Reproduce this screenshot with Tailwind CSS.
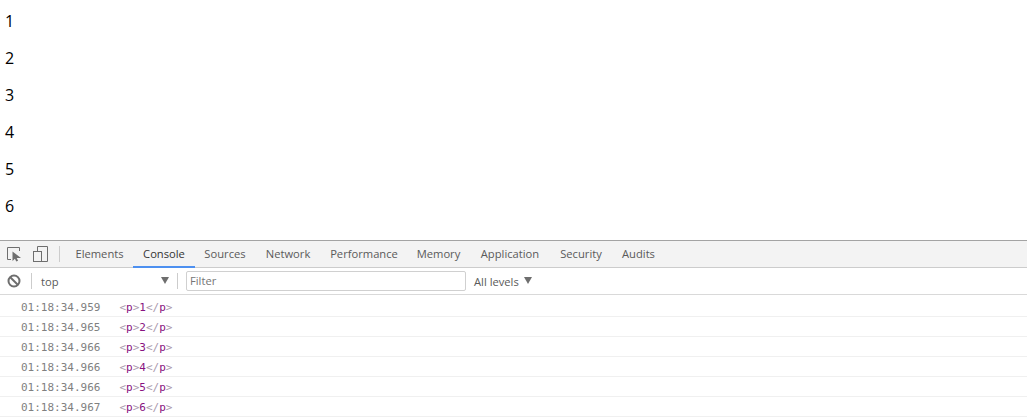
<!DOCTYPE html>
<html><head><meta charset="utf-8"><script src="https://cdn.jsdelivr.net/npm/@tailwindcss/browser@4"></script></head>
<body class="bg-white overflow-hidden">
<div class="w-[1027px] h-[417px] flex flex-col overflow-hidden font-['Open_Sans',sans-serif]">
  <div class="h-[240px] pl-[5px] pt-[11px] flex flex-col gap-[16px] text-[16px] leading-[21px] text-black">
    <p>1</p><p>2</p><p>3</p><p>4</p><p>5</p><p>6</p>
  </div>
  <div class="h-[28px] shrink-0 flex items-center bg-[#f3f3f3] border-t border-t-[#a3a3a3] border-b border-b-[#cccccc] text-[11.2px] text-[#5a5a5a]">
    <svg class="ml-[7px] shrink-0" width="15" height="15" viewBox="0 0 15 15" fill="none"><path d="M4 12.5H.5V.5H12.5V4" stroke="#6e6e6e" stroke-width="1"/><path d="M5.5 4.5v9.5l2.4-2.3 1.4 2.8 1.8-.8-1.4-2.7H14z" fill="#6e6e6e"/></svg>
    <svg class="ml-[11px] shrink-0" width="15" height="16" viewBox="0 0 15 16" fill="none"><path d="M4.5 5.5V.5h10v15h-6" stroke="#6e6e6e" stroke-width="1"/><rect x=".5" y="5.5" width="8" height="10" stroke="#6e6e6e" stroke-width="1"/></svg>
    <div class="ml-[11px] w-px h-[16px] bg-[#cccccc]"></div>
    <div class="ml-[6px] flex h-full">
      <span class="w-[67px] pt-[1px] flex items-center justify-center">Elements</span>
      <span class="w-[62px] pt-[2px] flex items-center justify-center text-[#333333] border-b-2 border-b-[#4d90f0] h-[27px]">Console</span>
      <span class="w-[60px] pt-[1px] flex items-center justify-center">Sources</span>
      <span class="w-[66px] pt-[1px] flex items-center justify-center">Network</span>
      <span class="w-[86px] pt-[1px] flex items-center justify-center">Performance</span>
      <span class="w-[63px] pt-[1px] flex items-center justify-center">Memory</span>
      <span class="w-[80px] pt-[1px] flex items-center justify-center">Application</span>
      <span class="w-[62px] pt-[1px] flex items-center justify-center">Security</span>
      <span class="w-[53px] pt-[1px] flex items-center justify-center">Audits</span>
    </div>
  </div>
  <div class="h-[27px] shrink-0 flex items-center bg-white border-b border-b-[#d9d9d9] text-[11.2px] text-[#5a5a5a]">
    <svg class="ml-[7px] shrink-0" width="14" height="14" viewBox="0 0 14 14" fill="none"><circle cx="7" cy="7" r="5.5" stroke="#6e6e6e" stroke-width="2"/><path d="M3 3l8 8" stroke="#6e6e6e" stroke-width="2"/></svg>
    <div class="ml-[10px] w-px h-[16px] bg-[#cccccc]"></div>
    <span class="ml-[9px] w-[120px] pt-[2px]">top</span>
    <span class="w-0 h-0 border-x-[4.5px] border-x-transparent border-t-[7px] border-t-[#6e6e6e] -mt-[2px]"></span>
    <div class="ml-[8px] w-px h-[16px] bg-[#cccccc]"></div>
    <div class="ml-[8px] w-[280px] h-[20px] border border-[#d0d0d0] rounded-[2px] pl-[3px] pt-[1px] flex items-center text-[#757575]">Filter</div>
    <span class="ml-[8px] pt-[2px]">All levels</span>
    <span class="ml-[5px] w-0 h-0 border-x-[4.5px] border-x-transparent border-t-[7px] border-t-[#6e6e6e] -mt-[2px]"></span>
  </div>
  <div class="pt-[2px] font-['DejaVu_Sans_Mono',monospace] text-[11px]">
    <div class="h-[20px] pl-[21px] pt-[4px] flex items-center gap-[19px] border-b border-b-[#f0f0f0]"><span class="text-[#808080]">01:18:34.959</span><span class="text-[#aa9aae]">&lt;<span class="text-[#881280]">p</span>&gt;<span class="text-[#881280]">1</span>&lt;/<span class="text-[#881280]">p</span>&gt;</span></div>
    <div class="h-[20px] pl-[21px] pt-[4px] flex items-center gap-[19px] border-b border-b-[#f0f0f0]"><span class="text-[#808080]">01:18:34.965</span><span class="text-[#aa9aae]">&lt;<span class="text-[#881280]">p</span>&gt;<span class="text-[#881280]">2</span>&lt;/<span class="text-[#881280]">p</span>&gt;</span></div>
    <div class="h-[20px] pl-[21px] pt-[4px] flex items-center gap-[19px] border-b border-b-[#f0f0f0]"><span class="text-[#808080]">01:18:34.966</span><span class="text-[#aa9aae]">&lt;<span class="text-[#881280]">p</span>&gt;<span class="text-[#881280]">3</span>&lt;/<span class="text-[#881280]">p</span>&gt;</span></div>
    <div class="h-[20px] pl-[21px] pt-[4px] flex items-center gap-[19px] border-b border-b-[#f0f0f0]"><span class="text-[#808080]">01:18:34.966</span><span class="text-[#aa9aae]">&lt;<span class="text-[#881280]">p</span>&gt;<span class="text-[#881280]">4</span>&lt;/<span class="text-[#881280]">p</span>&gt;</span></div>
    <div class="h-[20px] pl-[21px] pt-[4px] flex items-center gap-[19px] border-b border-b-[#f0f0f0]"><span class="text-[#808080]">01:18:34.966</span><span class="text-[#aa9aae]">&lt;<span class="text-[#881280]">p</span>&gt;<span class="text-[#881280]">5</span>&lt;/<span class="text-[#881280]">p</span>&gt;</span></div>
    <div class="h-[20px] pl-[21px] pt-[4px] flex items-center gap-[19px] border-b border-b-[#f0f0f0]"><span class="text-[#808080]">01:18:34.967</span><span class="text-[#aa9aae]">&lt;<span class="text-[#881280]">p</span>&gt;<span class="text-[#881280]">6</span>&lt;/<span class="text-[#881280]">p</span>&gt;</span></div>
  </div>
</div>
</body></html>
